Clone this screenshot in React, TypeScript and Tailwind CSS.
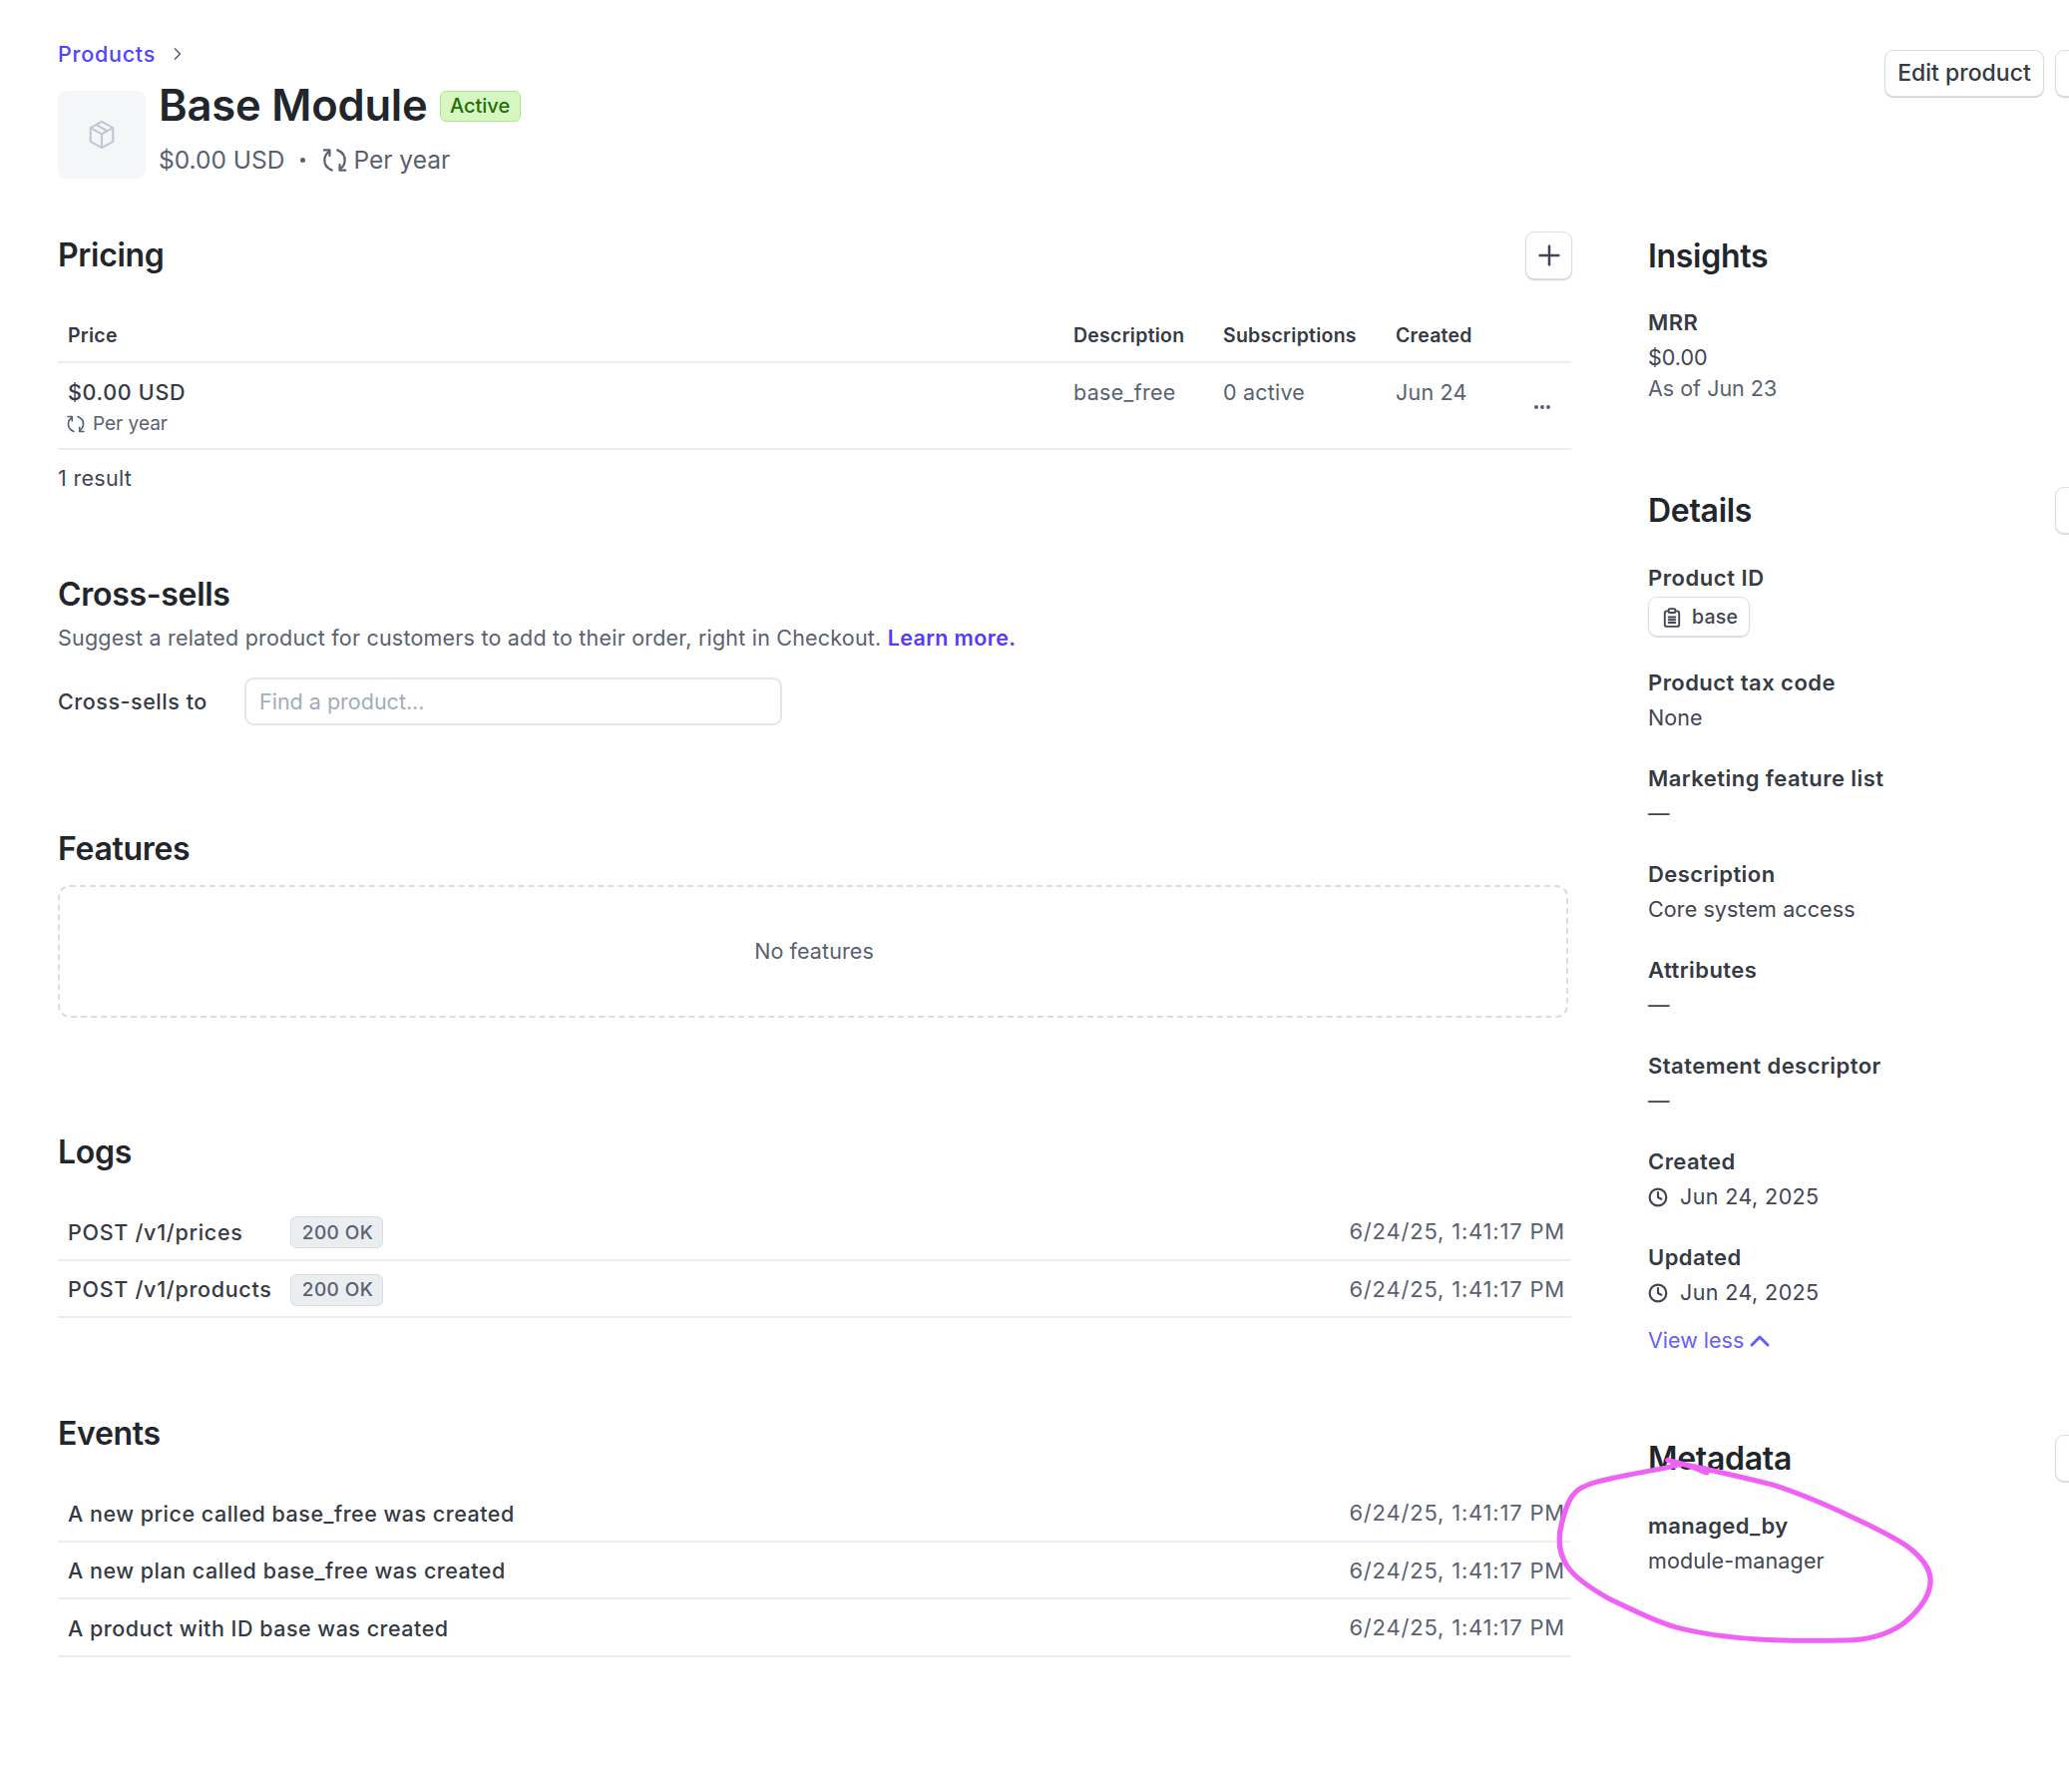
import { ChevronRight, ChevronUp, Clock, Plus } from "lucide-react";
import type { ReactNode } from "react";

function CycleIcon({ className }: { className: string }) {
  return (
    <svg className={className} viewBox="0 0 24 24" fill="none" stroke="currentColor" strokeWidth="2" strokeLinecap="round" strokeLinejoin="round">
      <path d="M9.500 21C5 19 2.500 15.500 3 11c.3-2.800 1.600-5 3.800-6.500" />
      <path d="M2.500 3h5v5" />
      <path d="M14.500 3c4.500 2 7 5.500 6.500 10-.3 2.800-1.600 5-3.800 6.500" />
      <path d="M21.500 21h-5v-5" />
    </svg>
  );
}

function BoxIcon() {
  return (
    <svg className="h-[30px] w-[30px] text-[#c0c8d2]" viewBox="0 0 24 24" fill="none" stroke="currentColor" strokeWidth="1.700" strokeLinejoin="round">
      <path d="M12 1.500l9 5v11l-9 5-9-5v-11z" />
      <path d="M3 6.500l9 5 9-5M12 11.500v11M7.500 4l9 5" />
    </svg>
  );
}

function ClipboardIcon() {
  return (
    <svg className="h-[20px] w-[20px] text-[#414552]" viewBox="0 0 18 18" fill="none" stroke="currentColor" strokeWidth="1.700" strokeLinecap="round" strokeLinejoin="round">
      <rect x="2.500" y="3" width="13" height="14" rx="2" />
      <rect x="6" y="1" width="6" height="3.500" rx="1" fill="white" />
      <path d="M6 8.500h6M6 11h6M6 13.500h6" />
    </svg>
  );
}

function SectionTitle({ children }: { children: ReactNode }) {
  return <h2 className="text-[32px] leading-[40px] font-semibold tracking-[-0.3px] text-[#21252c]">{children}</h2>;
}

function SideButton({ className }: { className: string }) {
  return <div className={`absolute left-[2060px] h-[47px] w-[40px] rounded-[9px] border border-[#d8dee4] bg-white shadow-[0_1px_1px_rgba(64,68,82,0.2)] ${className}`} />;
}

function Field({ label, children }: { label: string; children: ReactNode }) {
  return (
    <div className="mb-[25px]">
      <div className="text-[22px] leading-[36px] font-semibold tracking-[0.45px] text-[#353a44]">{label}</div>
      <div className="text-[21.500px] leading-[35px] tracking-[0.1px] text-[#414552]">{children}</div>
    </div>
  );
}

function DateValue({ value }: { value: string }) {
  return (
    <div className="flex items-center gap-[12px] tracking-[0.4px]">
      <Clock className="h-[20px] w-[20px] text-[#414552]" strokeWidth={2.600} />
      {value}
    </div>
  );
}

function ListRow({ time, children }: { time: string; children: ReactNode }) {
  return (
    <div className="flex h-[57.500px] w-[1517px] items-center justify-between border-b-2 border-[#ebeef1] pt-[2px] pr-[6px] pl-[10px] text-[21.500px]">
      <div className="flex items-center font-medium tracking-[0.5px] text-[#353a44]">{children}</div>
      <span className="text-[22px] tracking-[0.8px] text-[#596171]">{time}</span>
    </div>
  );
}

function LogRow({ path }: { path: string }) {
  return (
    <ListRow time="6/24/25, 1:41:17 PM">
      <span className="w-[223px] tracking-[0.7px]">{path}</span>
      <span className="mt-[1px] flex h-[32px] w-[93px] items-center justify-center rounded-[6px] border border-[#d8dee4] bg-[#ebeef1] pt-[1px] pl-[2px] text-[19px] font-medium tracking-[0.4px] text-[#596171]">200 OK</span>
    </ListRow>
  );
}

export default function App() {
  return (
    <div className="relative h-[1796px] w-[2074px] overflow-hidden bg-white font-['Inter',sans-serif]">
      <SideButton className="top-[488px]" />
      <SideButton className="top-[1438px]" />

      <header className="relative h-[232px] pt-[40px] pl-[58px]">
        <div className="flex h-[28px] items-center gap-[12px] text-[21.500px] font-medium tracking-[0.75px] text-[#4f46fb]">
          Products
          <ChevronRight className="h-[20px] w-[20px] text-[#596171]" strokeWidth={2} />
        </div>
        <div className="mt-[10px] flex gap-[13px]">
          <div className="mt-[13px] flex h-[88px] w-[88px] items-center justify-center rounded-[9px] bg-[#f5f6f8]">
            <BoxIcon />
          </div>
          <div>
            <div className="flex h-[56px] items-center gap-[12px]">
              <h1 className="text-[43.500px] font-semibold tracking-[-0.2px] text-[#21252c]">Base Module</h1>
              <span className="flex h-[31px] w-[81px] items-center justify-center rounded-[6px] border border-[#a6eb84] bg-[#d7f7c2] text-[20px] font-medium text-[#216e05]">Active</span>
            </div>
            <div className="mt-[8px] flex items-center text-[24.500px] leading-[36px] text-[#596171]">
              $0.00 USD
              <span className="mx-[16px] h-[5px] w-[5px] rounded-full bg-[#596171]" />
              <CycleIcon className="mr-[5px] h-[27px] w-[27px]" />
              Per year
            </div>
          </div>
        </div>
        <button className="absolute top-[50px] left-[1889px] h-[47px] w-[160px] rounded-[9px] border border-[#d8dee4] bg-white text-[23px] font-medium text-[#353a44] shadow-[0_1px_1px_rgba(64,68,82,0.25)]">Edit product</button>
        <div className="absolute top-[50px] left-[2060px] h-[47px] w-[40px] rounded-[9px] border border-[#d8dee4] bg-white shadow-[0_1px_1px_rgba(64,68,82,0.25)]" />
      </header>

      <div className="flex gap-[76px] pl-[58px]">
        <main className="w-[1518px]">
          <section className="h-[344px]">
            <div className="flex h-[48px] items-center justify-between">
              <SectionTitle>Pricing</SectionTitle>
              <button className="flex h-[48px] w-[47px] items-center justify-center rounded-[9px] border border-[#d8dee4] bg-white shadow-[0_1px_1px_rgba(64,68,82,0.25)]">
                <Plus className="h-[32px] w-[32px] text-[#414552]" strokeWidth={1.900} />
              </button>
            </div>
            <div className="mt-[35px] flex h-[49px] w-[1517px] items-center border-b-2 border-[#ebeef1] pb-[4px] text-[19.500px] font-semibold tracking-[0.25px] text-[#353a44]">
              <span className="w-[1018px] pl-[10px]">Price</span>
              <span className="w-[150px]">Description</span>
              <span className="w-[173px]">Subscriptions</span>
              <span>Created</span>
            </div>
            <div className="relative flex h-[87px] w-[1517px] border-b-2 border-[#ebeef1] pt-[12px] text-[21.500px] text-[#596171]">
              <div className="w-[1018px] pl-[10px]">
                <div className="leading-[34px] font-medium tracking-[0.7px] text-[#353a44]">$0.00 USD</div>
                <div className="-ml-[2px] flex items-center gap-[7px] text-[19px] leading-[30px]">
                  <CycleIcon className="h-[20px] w-[20px]" />
                  Per year
                </div>
              </div>
              <span className="w-[150px] leading-[34px] tracking-[0.3px]">base_free</span>
              <span className="w-[173px] leading-[34px] tracking-[0.2px]">0 active</span>
              <span className="leading-[34px] tracking-[0.2px]">Jun 24</span>
              <span className="absolute top-[42px] left-[1480px] flex gap-[2.500px]">
                <i className="h-[3.500px] w-[3.500px] rounded-full bg-[#596171]" />
                <i className="h-[3.500px] w-[3.500px] rounded-full bg-[#596171]" />
                <i className="h-[3.500px] w-[3.500px] rounded-full bg-[#596171]" />
              </span>
            </div>
            <div className="mt-[13px] text-[21.500px] leading-[30px] tracking-[0.3px] text-[#414552]">1 result</div>
          </section>

          <section className="h-[255px]">
            <SectionTitle>Cross-sells</SectionTitle>
            <p className="mt-[8px] text-[21.500px] leading-[30px] tracking-[0.2px] text-[#596171]">
              Suggest a related product for customers to add to their order, right in Checkout. <span className="font-semibold tracking-[0.35px] text-[#533afd]">Learn more.</span>
            </p>
            <div className="mt-[25px] flex items-center">
              <label className="w-[187px] text-[21.500px] font-medium tracking-[0.55px] text-[#353a44]">Cross-sells to</label>
              <input className="h-[48px] w-[539px] rounded-[9px] border-2 border-[#e3e7ec] px-[13px] text-[21.500px] outline-none placeholder:text-[#a3acba]" placeholder="Find a product..." />
            </div>
          </section>

          <section className="h-[304px]">
            <SectionTitle>Features</SectionTitle>
            <div className="mt-[16px] flex h-[133px] w-[1514px] items-center justify-center rounded-[12px] border-2 border-dashed border-[#d8dee4] pl-[2px] text-[21.500px] tracking-[0.1px] text-[#596171]">No features</div>
          </section>

          <section className="h-[282px]">
            <SectionTitle>Logs</SectionTitle>
            <div className="mt-[31px]">
              <LogRow path="POST /v1/prices" />
              <LogRow path="POST /v1/products" />
            </div>
          </section>

          <section>
            <SectionTitle>Events</SectionTitle>
            <div className="mt-[31px]">
              <ListRow time="6/24/25, 1:41:17 PM">A new price called base_free was created</ListRow>
              <ListRow time="6/24/25, 1:41:17 PM">A new plan called base_free was created</ListRow>
              <ListRow time="6/24/25, 1:41:17 PM">A product with ID base was created</ListRow>
            </div>
          </section>
        </main>

        <aside className="w-[340px] shrink-0 pt-[5px]">
          <SectionTitle>Insights</SectionTitle>
          <div className="mt-[29px] text-[21.500px] leading-[35px]">
            <div className="text-[22px] font-semibold tracking-[0.4px] text-[#353a44]">MRR</div>
            <div className="text-[#414552]">$0.00</div>
            <div className="-mt-[4px] text-[#596171]">As of Jun 23</div>
          </div>

          <div className="mt-[85px]">
            <SectionTitle>Details</SectionTitle>
          </div>
          <div className="mt-[30px]">
            <div className="text-[22px] leading-[35px] font-semibold tracking-[0.55px] text-[#353a44]">Product ID</div>
            <div className="mt-[1px] flex h-[40px] w-[102px] items-center gap-[10px] rounded-[9px] border border-[#d8dee4] pt-[2px] pl-[13px] text-[19.500px] font-medium tracking-[0.2px] text-[#414552] shadow-[0_1px_1px_rgba(64,68,82,0.2)]">
              <ClipboardIcon />
              base
            </div>
          </div>
          <div className="mt-[28px]">
            <Field label="Product tax code">None</Field>
            <Field label="Marketing feature list">—</Field>
            <Field label="Description">Core system access</Field>
            <Field label="Attributes">—</Field>
            <Field label="Statement descriptor">—</Field>
            <Field label="Created"><DateValue value="Jun 24, 2025" /></Field>
            <Field label="Updated"><DateValue value="Jun 24, 2025" /></Field>
          </div>
          <div className="-mt-[12px] flex h-[35px] items-center text-[21.500px] leading-[35px] text-[#675dff]">
            View less
            <ChevronUp className="h-[32px] w-[32px]" strokeWidth={2.250} />
          </div>

          <div className="mt-[81px]">
            <SectionTitle>Metadata</SectionTitle>
          </div>
          <div className="mt-[30px] text-[21.500px] leading-[35px]">
            <div className="text-[22px] font-semibold tracking-[0.4px] text-[#353a44]">managed_by</div>
            <div className="tracking-[0.15px] text-[#414552]">module-manager</div>
          </div>
        </aside>
      </div>

      <svg className="absolute top-[1400px] left-[1520px] h-[300px] w-[554px]" viewBox="0 0 1568 900" preserveAspectRatio="none" fill="none" stroke="#f062f5" strokeWidth="15" strokeLinecap="round" strokeLinejoin="round">
        <path d="M430 190C480 205 550 218 720 262C790 285 880 325 960 365C1020 395 1070 420 1110 450C1150 482 1175 515 1175 552C1175 595 1145 640 1100 680C1060 710 1000 732 930 732C860 733 780 733 700 730C620 725 520 712 450 692C380 670 320 635 260 605C215 578 170 548 145 510C120 470 118 420 130 375C140 335 150 300 175 280C210 255 270 245 340 230C390 220 440 210 470 202C490 205 520 220 540 228" />
      </svg>
    </div>
  );
}
